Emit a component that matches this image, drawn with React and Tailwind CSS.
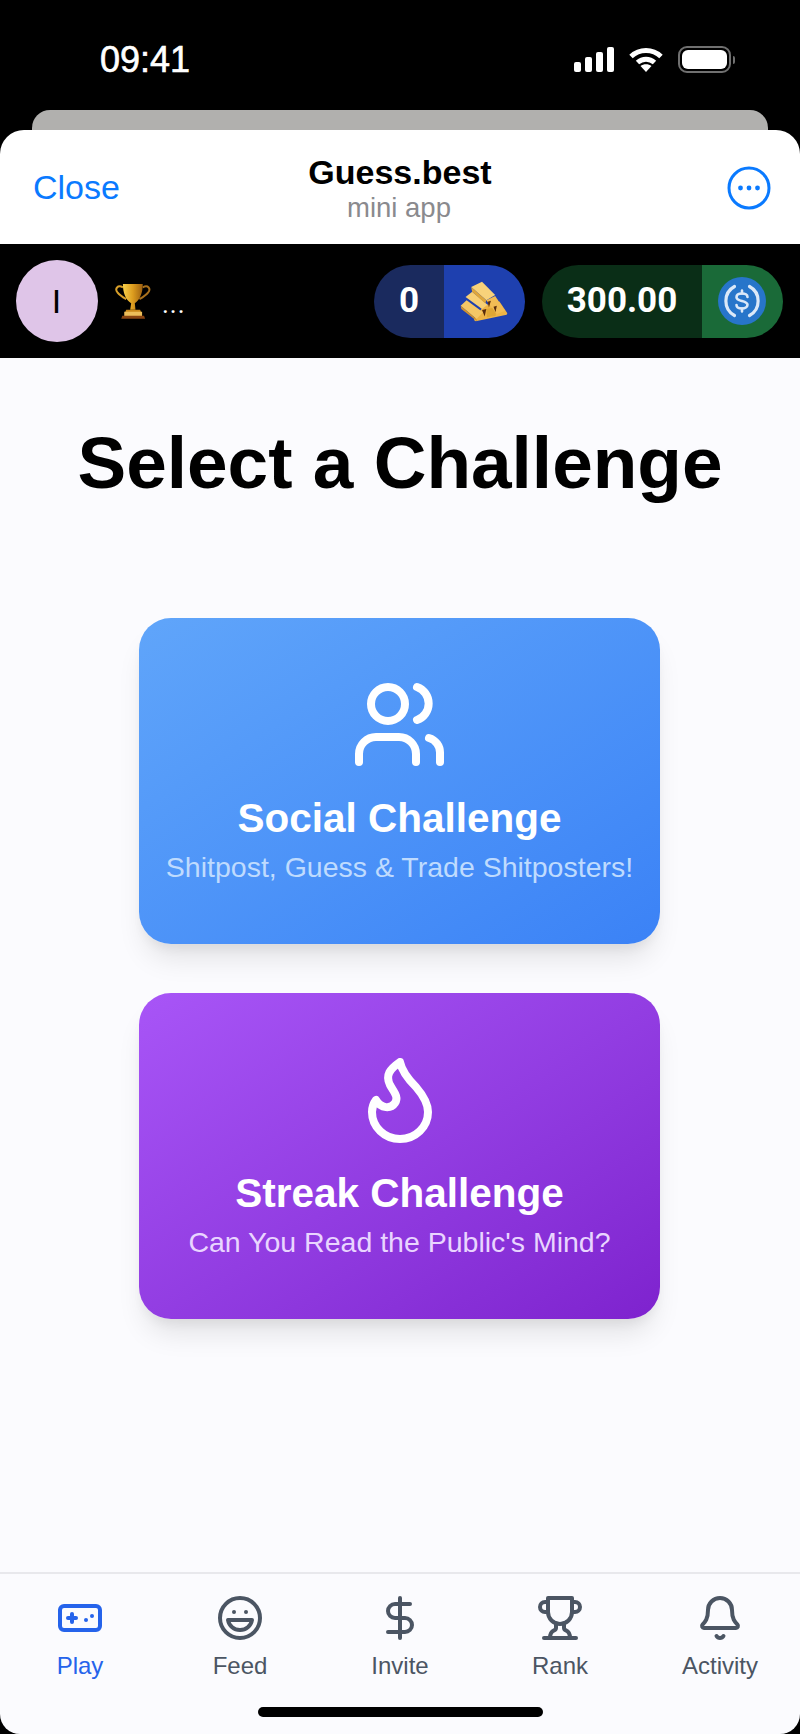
import { Gamepad, DollarSign, Bell } from "lucide-react";

function SignalIcon() {
  return (
    <svg width="40" height="25" viewBox="0 0 40 25" fill="white">
      <rect x="0" y="15" width="7" height="10" rx="2" />
      <rect x="11" y="10" width="7" height="15" rx="2" />
      <rect x="22" y="5" width="7" height="20" rx="2" />
      <rect x="33" y="0" width="7" height="25" rx="2" />
    </svg>
  );
}

function WifiIcon() {
  return (
    <svg width="34" height="25" viewBox="0 0 34 25" fill="none" stroke="white" strokeWidth="5">
      <path d="M2 9.500C10.500 1.500 23.500 1.500 32 9.500" />
      <path d="M8.500 15.500C13.500 11 20.500 11 25.500 15.500" />
      <path d="M17 25L11.500 19C14.500 16.500 19.500 16.500 22.500 19Z" fill="white" stroke="none" />
    </svg>
  );
}

function BatteryIcon() {
  return (
    <div className="flex items-center gap-[2px]">
      <div className="w-[53px] h-[27px] rounded-[9px] border-2 border-[#707070] p-[2px]">
        <div className="w-full h-full rounded-[6px] bg-white" />
      </div>
      <div className="w-[2px] h-[8px] rounded-r-full bg-[#707070]" />
    </div>
  );
}

function MoreIcon() {
  return (
    <svg width="44" height="44" viewBox="0 0 44 44" fill="#0a7aff">
      <circle cx="22" cy="22" r="20" fill="none" stroke="#0a7aff" strokeWidth="3" />
      <circle cx="13.500" cy="22" r="2.400" />
      <circle cx="22" cy="22" r="2.400" />
      <circle cx="30.500" cy="22" r="2.400" />
    </svg>
  );
}

// trophy emoji, traced from the crop
function TrophyEmoji() {
  return (
    <svg width="38" height="37" viewBox="25 25 115 112" fill="none">
      <defs>
        <linearGradient id="cup" x1="0" y1="0" x2="1" y2="0">
          <stop offset="0" stopColor="#f7d04a" />
          <stop offset="0.5" stopColor="#dc9c1e" />
          <stop offset="1" stopColor="#9c5f10" />
        </linearGradient>
      </defs>
      <path d="M52 38C36 30 26 42 36 54c6 8 16 14 26 20" stroke="#d9a02a" strokeWidth="6" />
      <path d="M112 38c16-8 26 4 16 16-6 8-16 14-26 20" stroke="#a8701c" strokeWidth="6" />
      <path d="M52 28h60c0 26-8 48-24 58l2 20H74l3-20C60 76 52 54 52 28z" fill="url(#cup)" />
      <path d="M62 106h42l4 10H58z" fill="#c98718" />
      <rect x="56" y="112" width="54" height="14" fill="#edbe5a" />
      <path d="M50 124h66l3 9H47z" fill="#8a4512" />
    </svg>
  );
}

// gold bars emoji, traced from the crop
function GoldBars() {
  return (
    <svg width="48" height="41" viewBox="28 50 146 124">
      <path d="M100 125l48-13 24 36-2 4-94 20-6-4z" fill="#eeb446" />
      <path d="M108 135l27-5 2 25-27 5z" fill="#dfa634" />
      <path d="M30 125l18-17 50 37-20 20z" fill="#f5c765" />
      <path d="M30 125l48 40 2 7-48-37z" fill="#d2922c" />
      <path d="M45 98l20-16 47 40-17 13z" fill="#f7cf74" />
      <path d="M108 108l27-13 30 45-25 10z" fill="#f2bc55" />
      <path d="M62 68l33-16 40 40-27 16z" fill="#f8d27a" />
      <path d="M62 68l46 40-3 10-40-36z" fill="#dfa63a" />
      <path d="M112 113l10-3-6 20zM95 138l13-3-5 23zM130 128l10-3-4 20z" fill="#5a2d0c" />
    </svg>
  );
}

function UsdcLogo() {
  return (
    <svg width="48" height="48" viewBox="0 0 48 48" fill="none" stroke="#dbe8f8" strokeLinecap="round">
      <circle cx="24" cy="24" r="24" fill="#2775ca" stroke="none" />
      <path d="M16.500 9.500A16.500 16.500 0 0 0 16.500 38.500" strokeWidth="3.200" />
      <path d="M31.500 9.500A16.500 16.500 0 0 1 31.500 38.500" strokeWidth="3.200" />
      <path d="M29.500 20c0-2.500-2.300-3.500-5.500-3.500s-5.500 1.300-5.500 3.700 2.500 3 5.500 3.800 5.500 1.500 5.500 3.800-2.500 3.700-5.500 3.700-5.500-1-5.500-3.500" strokeWidth="2.600" />
      <path d="M24 13.500v3M24 31.500v3" strokeWidth="2.600" />
    </svg>
  );
}

function UsersIcon() {
  return (
    <svg width="96" height="96" viewBox="0 0 96 96" fill="none" stroke="white" strokeWidth="8" strokeLinecap="round" strokeLinejoin="round">
      <circle cx="36" cy="29" r="17" />
      <path d="M7 87v-8a17 17 0 0 1 17-17h23a17 17 0 0 1 17 17v8" />
      <path d="M65 12a17.500 17.500 0 0 1 0 33" />
      <path d="M77 63a15 15 0 0 1 11 15v9" />
    </svg>
  );
}

function FlameIcon() {
  return (
    <svg width="96" height="96" viewBox="0 0 96 96" fill="none" stroke="white" strokeWidth="8" strokeLinecap="round" strokeLinejoin="round">
      <path d="M48 12C38 19 33 25 38 35c4 7 9 12 5 18-4 6-14 6-19-3-3 4-4 8-4 12a28 27 0 0 0 56 0c0-10-6-18-12-25C57 30 50 22 48 12z" />
    </svg>
  );
}

function LaughIcon({ size }) {
  return (
    <svg width={size} height={size} viewBox="0 0 24 24" fill="none" stroke="currentColor" strokeWidth="2" strokeLinecap="round" strokeLinejoin="round">
      <circle cx="12" cy="12" r="10" />
      <path d="M18 13a6 6 0 0 1-6 5 6 6 0 0 1-6-5h12Z" />
      <line x1="9" x2="9.010" y1="9" y2="9" />
      <line x1="15" x2="15.010" y1="9" y2="9" />
    </svg>
  );
}

// the newer lucide trophy has another shape, so the cup is drawn here
function TrophyIcon({ size }) {
  return (
    <svg width={size} height={size} viewBox="0 0 24 24" fill="none" stroke="currentColor" strokeWidth="2" strokeLinecap="round" strokeLinejoin="round">
      <path d="M6 9H4.500a2.500 2.500 0 0 1 0-5H6" />
      <path d="M18 9h1.500a2.500 2.500 0 0 0 0-5H18" />
      <path d="M4 22h16" />
      <path d="M10 14.660V17c0 .55-.47.98-.97 1.210C7.850 18.750 7 20.240 7 22" />
      <path d="M14 14.660V17c0 .55.47.98.97 1.210C16.150 18.750 17 20.240 17 22" />
      <path d="M18 2H6v7a6 6 0 0 0 12 0V2Z" />
    </svg>
  );
}

function ChallengeCard({ icon: Icon, title, subtitle, cardClass, subClass }) {
  return (
    <div className={`w-[521px] h-[326px] rounded-[32px] flex flex-col items-center pt-[57px] shadow-[0_20px_28px_-6px_rgba(0,0,0,0.1),0_8px_12px_-4px_rgba(0,0,0,0.06)] ${cardClass}`}>
      <Icon />
      <h2 className="mt-[23px] text-[40.5px] leading-[48px] font-bold text-white">{title}</h2>
      <p className={`mt-[5px] text-[28.5px] leading-[40px] ${subClass}`}>{subtitle}</p>
    </div>
  );
}

const tabs = [
  { label: "Play", icon: Gamepad, active: true },
  { label: "Feed", icon: LaughIcon },
  { label: "Invite", icon: DollarSign },
  { label: "Rank", icon: TrophyIcon },
  { label: "Activity", icon: Bell },
];

export default function App() {
  return (
    <div className="w-[800px] h-[1734px] bg-black flex flex-col font-['Liberation_Sans',sans-serif] overflow-hidden">
      {/* status bar */}
      <div className="h-[110px] flex items-start justify-between pl-[100px] pr-[65px] pt-[46px] shrink-0">
        <span className="text-[36px] leading-[27px] text-white [-webkit-text-stroke:0.6px_white]">09:41</span>
        <div className="flex items-center gap-[15px]">
          <SignalIcon />
          <WifiIcon />
          <BatteryIcon />
        </div>
      </div>
      <div className="h-5 mx-8 rounded-t-[18px] bg-[#b1b0ae] shrink-0" />

      {/* mini app header */}
      <div className="h-[114px] bg-white rounded-t-[24px] grid grid-cols-3 items-center px-[33px] shrink-0">
        <span className="text-[34px] leading-none text-[#0a7aff]">Close</span>
        <div className="flex flex-col items-center pt-[2px]">
          <span className="text-[34px] leading-[40px] font-bold text-black">Guess.best</span>
          <span className="text-[27.5px] leading-[32px] text-[#8a8a8e] pr-[2px]">mini app</span>
        </div>
        <div className="flex justify-end -mr-[4px] pt-[1px]">
          <MoreIcon />
        </div>
      </div>

      {/* balance bar */}
      <div className="h-[114px] bg-black flex items-center pl-4 pr-[17px] shrink-0">
        <div className="w-[82px] h-[82px] rounded-full bg-[#dfc5e8] flex items-center justify-center text-[34px] text-black pr-[1px]">I</div>
        <div className="ml-[16px] mt-[1px]"><TrophyEmoji /></div>
        <span className="ml-[10px] mt-[5px] font-['Roboto',sans-serif] text-[26px] leading-none tracking-[1px] text-white">...</span>
        <div className="ml-auto flex items-center gap-[17px] font-['Roboto',sans-serif] font-bold text-white text-[35px]">
          <div className="w-[151px] h-[73px] rounded-full overflow-hidden flex">
            <div className="w-[70px] bg-[#1a2a5e] flex items-center justify-center">0</div>
            <div className="flex-1 bg-[#1e40af] flex items-center justify-center pr-[2px]"><GoldBars /></div>
          </div>
          <div className="w-[241px] h-[73px] rounded-full overflow-hidden flex">
            <div className="w-[160px] bg-[#0a2e17] flex items-center justify-center">300.00</div>
            <div className="flex-1 bg-[#1a6a38] flex items-center justify-center pr-[2px]"><UsdcLogo /></div>
          </div>
        </div>
      </div>

      {/* main */}
      <div className="flex-1 bg-[#fbfbfe] rounded-b-[20px] flex flex-col relative">
        <main className="flex-1 flex flex-col items-center">
          <h1 className="mt-[63px] text-[73px] leading-[84px] font-bold text-black">Select a Challenge</h1>
          <div className="mt-[113px] flex flex-col gap-[49px] pr-[1px]">
            <ChallengeCard
              icon={UsersIcon}
              title="Social Challenge"
              subtitle="Shitpost, Guess & Trade Shitposters!"
              cardClass="bg-linear-to-br from-[#60a5fa] to-[#3b82f6]"
              subClass="text-[#bfdbfe]"
            />
            <ChallengeCard
              icon={FlameIcon}
              title="Streak Challenge"
              subtitle="Can You Read the Public's Mind?"
              cardClass="bg-linear-to-br from-[#a855f7] to-[#7e22ce]"
              subClass="text-[#e9d5ff]"
            />
          </div>
        </main>

        <nav className="h-[162px] border-t-2 border-[#e8e8ec] grid grid-cols-5 pt-[20px]">
          {tabs.map((t) => (
            <div key={t.label} className={`flex flex-col items-center ${t.active ? "text-[#2563eb]" : "text-[#4b5563]"}`}>
              <t.icon size={48} strokeWidth={2} />
              <span className="text-[24px] leading-[32px] mt-[8px]">{t.label}</span>
            </div>
          ))}
        </nav>
        <div className="absolute left-[258px] bottom-[17px] w-[285px] h-[10px] rounded-full bg-black" />
      </div>
    </div>
  );
}
